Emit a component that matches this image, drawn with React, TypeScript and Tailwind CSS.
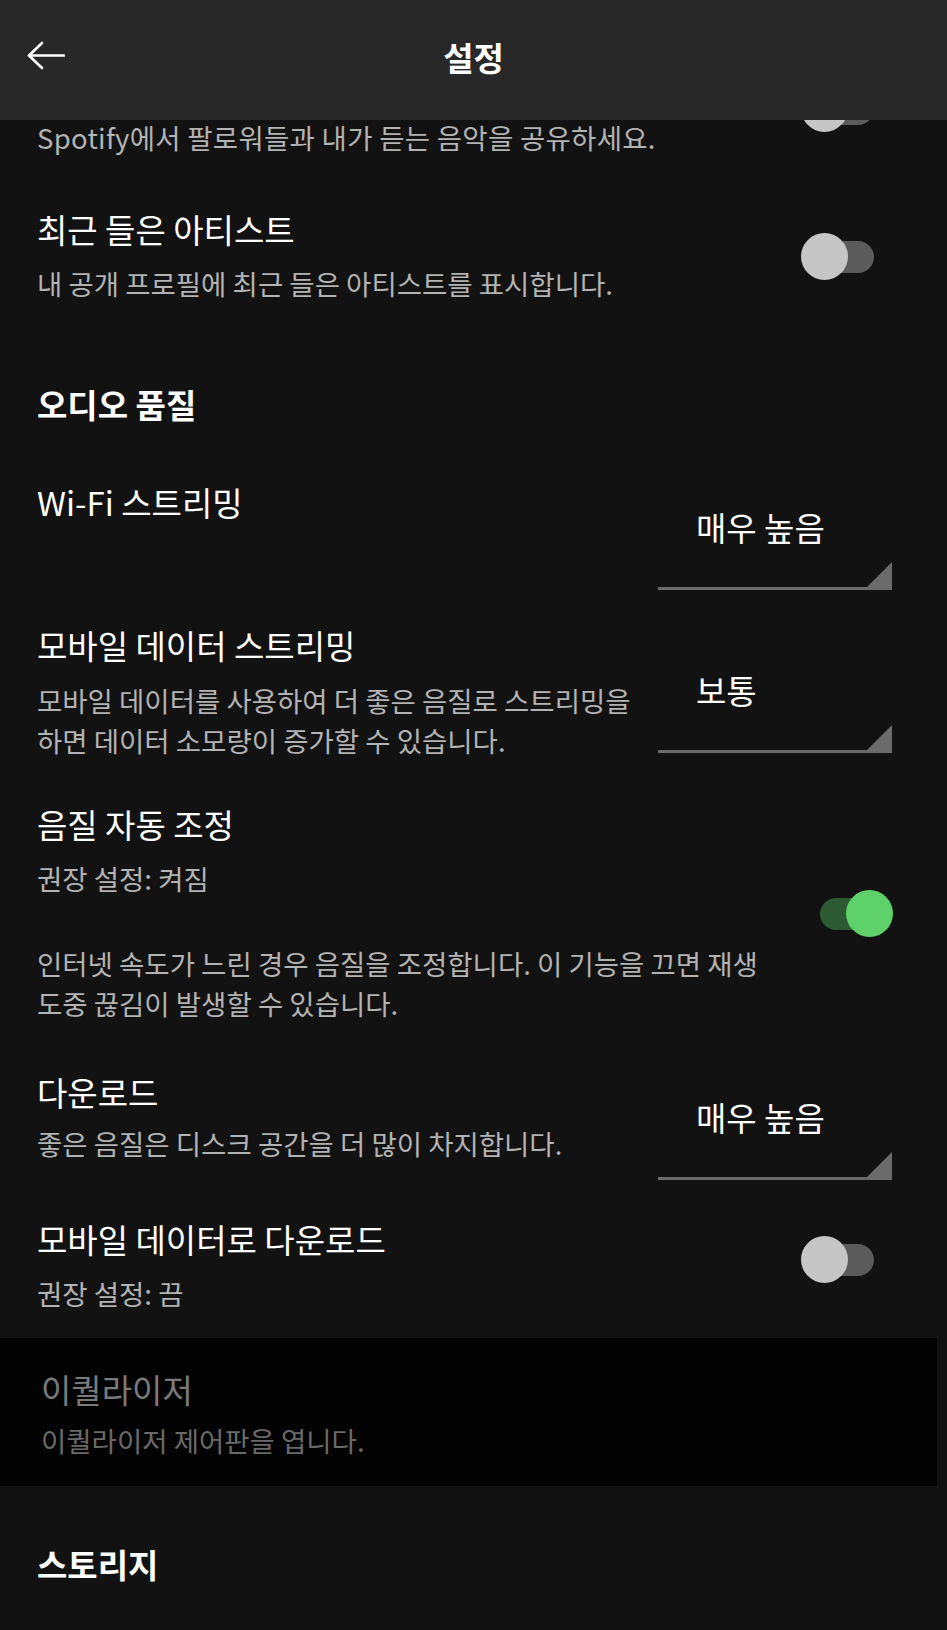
import React from 'react';

const FONT = "font-['Noto_Sans_CJK_KR','Noto_Sans',sans-serif]";

function Toggle({ on }: { on?: boolean }) {
  return (
    <div className="relative w-[92px] h-[47px] shrink-0">
      <div
        className={`absolute left-[19px] top-[8px] w-[54px] h-[32px] rounded-full ${
          on ? 'bg-[#2b5a33]' : 'bg-[#5b5b5b]'
        }`}
      />
      <div
        className={`absolute top-0 w-[47px] h-[47px] rounded-full ${
          on ? 'left-[45px] bg-[#5fd16b]' : 'left-0 bg-[#c6c6c6]'
        }`}
      />
    </div>
  );
}

function Dropdown({ value }: { value: string }) {
  return (
    <div className="w-[234px] shrink-0">
      <div className="pl-[38px] text-[33px] leading-[40px] text-white">{value}</div>
      <svg width="234" height="28" viewBox="0 0 234 28" className="block mt-[15px]">
        <rect x="0" y="25" width="234" height="3" fill="#6b6b6b" />
        <polygon points="206,28 234,28 234,0" fill="#6b6b6b" />
      </svg>
    </div>
  );
}

function Title({ children }: { children: React.ReactNode }) {
  return <div className="text-[33px] leading-[40px] text-white whitespace-nowrap">{children}</div>;
}

function Desc({ children, className = '' }: { children: React.ReactNode; className?: string }) {
  return (
    <div className={`text-[27.5px] leading-[40px] text-[#b3b3b3] whitespace-nowrap ${className}`}>
      {children}
    </div>
  );
}

export default function App() {
  return (
    <div className={`w-[947px] min-h-[1630px] bg-[#121212] overflow-hidden ${FONT}`}>
      {/* top bar */}
      <header className="relative z-10 h-[120px] bg-[#282828] flex items-center justify-center">
        <button className="absolute left-[27px] top-[41px]">
          <svg width="38" height="29" viewBox="0 0 38 29" fill="none" stroke="#ffffff" strokeWidth="2.6" strokeLinecap="round" strokeLinejoin="round">
            <path d="M2 14.5H37" />
            <path d="M15 2L2 14.5L15 27" />
          </svg>
        </button>
        <h1 className="text-[33px] font-bold text-white -mt-[4px]">설정</h1>
      </header>

      {/* partially scrolled row (sits under the header) */}
      <div className="-mt-[57px] flex items-center justify-between pl-[37px] pr-[54px]">
        <div>
          <Title>리스닝 활동 공유</Title>
          <Desc className="mt-[14px] tracking-[0.01em]">Spotify에서 팔로워들과 내가 듣는 음악을 공유하세요.</Desc>
        </div>
        <div className="-mt-[4px]">
          <Toggle />
        </div>
      </div>

      <div className="mt-[52px] flex items-center justify-between pl-[37px] pr-[54px]">
        <div>
          <Title>최근 들은 아티스트</Title>
          <Desc className="mt-[14px]">내 공개 프로필에 최근 들은 아티스트를 표시합니다.</Desc>
        </div>
        <Toggle />
      </div>

      {/* audio quality */}
      <h2 className="mt-[81px] pl-[37px] text-[33px] leading-[40px] font-bold text-white">오디오 품질</h2>

      <div className="mt-[58px] flex items-start justify-between pl-[37px] pr-[55px]">
        <Title>Wi-Fi 스트리밍</Title>
        <div className="mt-[25px]">
          <Dropdown value="매우 높음" />
        </div>
      </div>

      <div className="mt-[35px] flex items-start justify-between pl-[37px] pr-[55px]">
        <div>
          <Title>모바일 데이터 스트리밍</Title>
          <Desc className="mt-[15px]">
            모바일 데이터를 사용하여 더 좋은 음질로 스트리밍을
            <br />
            하면 데이터 소모량이 증가할 수 있습니다.
          </Desc>
        </div>
        <div className="mt-[45px]">
          <Dropdown value="보통" />
        </div>
      </div>

      <div className="mt-[44px] flex items-center justify-between pl-[37px] pr-[54px]">
        <div>
          <Title>음질 자동 조정</Title>
          <Desc className="mt-[14px]">권장 설정: 켜짐</Desc>
          <Desc className="mt-[45px]">
            인터넷 속도가 느린 경우 음질을 조정합니다. 이 기능을 끄면 재생
            <br />
            도중 끊김이 발생할 수 있습니다.
          </Desc>
        </div>
        <Toggle on />
      </div>

      <div className="mt-[49px] flex items-start justify-between pl-[37px] pr-[55px]">
        <div>
          <Title>다운로드</Title>
          <Desc className="mt-[11px]">좋은 음질은 디스크 공간을 더 많이 차지합니다.</Desc>
        </div>
        <div className="mt-[25px]">
          <Dropdown value="매우 높음" />
        </div>
      </div>

      <div className="mt-[39px] flex items-center justify-between pl-[37px] pr-[54px]">
        <div>
          <Title>모바일 데이터로 다운로드</Title>
          <Desc className="mt-[14px]">권장 설정: 끔</Desc>
        </div>
        <div className="-mt-[14px]">
          <Toggle />
        </div>
      </div>

      {/* disabled equalizer */}
      <div className="mt-[25px] mr-[10px] bg-[#030303] pl-[41px] pt-[31px] pb-[26px]">
        <div className="text-[33px] leading-[40px] text-[#7a7a7a]">이퀄라이저</div>
        <div className="mt-[11px] text-[27.5px] leading-[40px] text-[#6a6a6a]">이퀄라이저 제어판을 엽니다.</div>
      </div>

      <h2 className="mt-[58px] pl-[37px] text-[33px] leading-[40px] font-bold text-white">스토리지</h2>
    </div>
  );
}
